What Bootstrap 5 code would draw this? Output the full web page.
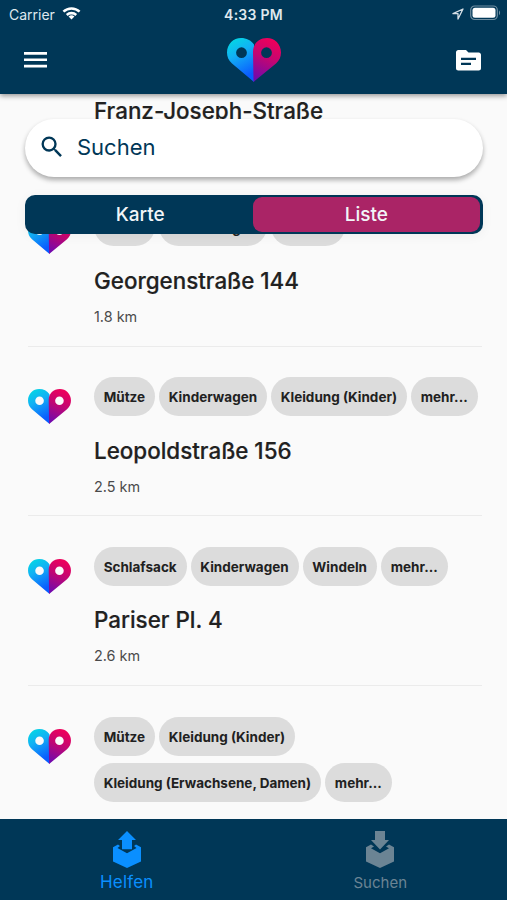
<!DOCTYPE html>
<html lang="de">
<head>
<meta charset="utf-8">
<meta name="viewport" content="width=device-width, initial-scale=1">
<title>Helfen</title>
<link href="https://cdn.jsdelivr.net/npm/bootstrap@5.3.0/dist/css/bootstrap.min.css" rel="stylesheet">
<style>
body{font-family:Inter,"Liberation Sans",sans-serif;background:#fafafa;color:#212121}
svg{display:block;flex:none}
.app{height:900px}
.navy{background:#003757}
.topbar{height:94px;z-index:3;box-shadow:0 2px 5px rgba(0,0,0,.4)}
.status{height:28px;font-size:14px;color:#dfe8ee;padding:0 6px 0 9px}
.clock{left:0;right:0;font-weight:600;letter-spacing:.25px}
.wifi{margin:0 0 2px 7px}
.battery{margin:0 0 2px 6px}
.tools{height:64px;padding:0 26px 0 24px}
.brand{margin-left:4px}
.feed{margin-top:-87px;padding:0 25px 0 28px}
.entry{height:169.8px;padding-top:30.5px;border-bottom:1px solid #ebebeb}
.entry:first-child{border-color:transparent}
.entry:first-child .street{margin-top:59.5px}
.entry .logo{margin-top:12px;margin-right:23px}
.chips{column-gap:4px;row-gap:7px;margin-right:-4px}
.chip{height:39px;border-radius:20px;background:#dcdcdc;padding:2px 10px 0 9.7px;font-size:13.500px;font-weight:700;white-space:nowrap}
.street{font-size:22.4px;line-height:28px;font-weight:500;-webkit-text-stroke:.2px #212121;margin-top:20.500px;white-space:nowrap}
.dist{font-size:14.4px;line-height:20px;margin-top:12px;color:#4a4a4a}
.overlay{top:25px;left:25px;right:24px;z-index:2}
.search{height:58px;color:#003757;font-size:22px;padding:0 0 2px 13px;gap:11px;box-shadow:0 3px 5px rgba(0,0,0,.32)}
.switch{height:39px;margin-top:18px;border-radius:10px;padding:2px 3px 2px 0;font-size:19px;font-weight:500;color:#f2f5f8;box-shadow:0 2px 12px rgba(0,0,0,.05)}
.switch>div{padding-top:1px}
.switch .idle-half{padding-left:3px}
.switch .on{background:#aa2466;border-radius:9px}
.tabs{height:81px;z-index:3}
.tab{padding-top:12px;font-size:17px;line-height:22px;color:#0a8fff}
.tab.idle{color:#6b8494;font-size:15px}
.tab span{margin-top:3px;letter-spacing:.2px}
.tab.idle span{margin-top:4px;letter-spacing:0}
</style>
<script src="https://cdn.jsdelivr.net/npm/bootstrap@5.3.0/dist/js/bootstrap.bundle.min.js"></script>
</head>
<body>
<svg width="0" height="0" class="position-absolute" aria-hidden="true">
<defs>
<linearGradient id="blue" x1="0" y1="0" x2=".35" y2="1"><stop offset="0" stop-color="#00dfe0"/><stop offset=".45" stop-color="#12b0f5"/><stop offset="1" stop-color="#0a5cff"/></linearGradient>
<linearGradient id="pink" x1=".6" y1="0" x2=".3" y2="1"><stop offset="0" stop-color="#f0005a"/><stop offset=".45" stop-color="#c20672"/><stop offset="1" stop-color="#7009ae"/></linearGradient>
<symbol id="heart" viewBox="0 0 54 44">
<path fill="url(#blue)" fill-rule="evenodd" d="M27 44 5 25.500C1.500 22.500 0 18.500 0 14.500 0 6 6.500 0 14 0c5.500 0 10 2.200 13 6.500ZM14.500 9.300a5.400 5.400 0 1 0 0 10.800 5.400 5.400 0 0 0 0-10.800Z"/>
<path fill="url(#pink)" fill-rule="evenodd" d="M26.500 44 49 25.500c3.500-3 5-7 5-11C54 6 47.500 0 40 0c-8 0-14 5.500-14 14ZM39.500 9.300a5.400 5.400 0 1 0 0 10.800 5.400 5.400 0 0 0 0-10.800Z"/>
</symbol>
</defs>
</svg>
<div class="app d-flex flex-column overflow-hidden">
<header class="topbar navy position-relative flex-shrink-0">
<div class="status d-flex align-items-center position-relative">
<span>Carrier</span>
<svg class="wifi" width="19" height="15" viewBox="1 1 20 15" fill="none" stroke="#fff" stroke-width="2.700"><path d="M2.500 6.500a12.500 12.500 0 0 1 17 0"/><path d="M6 10a7.500 7.500 0 0 1 10 0"/><path d="M11 14.800 7.900 11.700a4.600 4.600 0 0 1 6.200 0Z" fill="#fff" stroke="none"/></svg>
<span class="clock position-absolute text-center">4:33 PM</span>
<svg class="ms-auto" width="12" height="12" viewBox="0 0 12 12" fill="none" stroke="#d5dfe6" stroke-width="1.300" stroke-linejoin="round"><path d="M11 1 1 5.700h5V11Z"/></svg>
<svg class="battery" width="31" height="16" viewBox="0 0 31 16"><rect x=".7" y="1" width="26.600" height="13.500" rx="4" fill="none" stroke="#6f8ea1" stroke-width="1.200"/><rect x="2.500" y="2.800" width="23" height="10" rx="2.500" fill="#fff"/><path d="M29 5.500c1.400.6 1.400 4 0 4.600Z" fill="#6f8ea1"/></svg>
</div>
<div class="tools d-flex align-items-center justify-content-between">
<svg width="23" height="16" viewBox="0 0 23 16" fill="#fff"><path d="M0 0h23v2.700H0zM0 6.400h23v2.700H0zM0 12.700h23v2.700H0z"/></svg>
<svg class="brand" width="54" height="44"><use href="#heart"/></svg>
<svg width="25" height="21" viewBox="0 0 25 21"><path fill="#fff" d="M2.300 0H10l2.500 2.500h10.200C24 2.500 25 3.500 25 4.800v13.400c0 1.300-1 2.300-2.300 2.300H2.300C1 20.500 0 19.500 0 18.200V2.300C0 1 1 0 2.300 0Z"/><path fill="#003757" d="M5 7.800h15V10H5zM5 12.800h10V15H5z"/></svg>
</div>
</header>
<main class="position-relative flex-grow-1 overflow-hidden">
<div class="overlay position-absolute">
<div class="search bg-white rounded-pill d-flex align-items-center">
<svg width="28" height="28" viewBox="0 0 24 24" fill="#003757"><path d="M15.500 14h-.79l-.28-.27A6.470 6.470 0 0 0 16 9.500 6.500 6.500 0 1 0 9.500 16c1.610 0 3.090-.59 4.230-1.570l.27.28v.79l5 4.990L20.490 19l-4.990-5Zm-6 0a4.500 4.500 0 1 1 0-9 4.500 4.500 0 0 1 0 9Z"/></svg>
<span>Suchen</span>
</div>
<div class="switch navy d-flex text-center">
<div class="idle-half w-50 d-flex align-items-center justify-content-center">Karte</div>
<div class="on w-50 d-flex align-items-center justify-content-center">Liste</div>
</div>
</div>
<div class="feed">
<article class="entry d-flex align-items-start"><svg class="logo" width="43" height="35"><use href="#heart"/></svg>
<div class="flex-grow-1"><div class="street">Franz-Joseph-Straße</div></div></article>
<article class="entry d-flex align-items-start"><svg class="logo" width="43" height="35"><use href="#heart"/></svg>
<div class="flex-grow-1"><div class="chips d-flex flex-wrap"><span class="chip d-flex align-items-center">Mütze</span><span class="chip d-flex align-items-center">Kinderwagen</span><span class="chip d-flex align-items-center">Windeln</span></div>
<div class="street">Georgenstraße 144</div><div class="dist">1.8 km</div></div></article>
<article class="entry d-flex align-items-start"><svg class="logo" width="43" height="35"><use href="#heart"/></svg>
<div class="flex-grow-1"><div class="chips d-flex flex-wrap"><span class="chip d-flex align-items-center">Mütze</span><span class="chip d-flex align-items-center">Kinderwagen</span><span class="chip d-flex align-items-center">Kleidung (Kinder)</span><span class="chip d-flex align-items-center">mehr...</span></div>
<div class="street">Leopoldstraße 156</div><div class="dist">2.5 km</div></div></article>
<article class="entry d-flex align-items-start"><svg class="logo" width="43" height="35"><use href="#heart"/></svg>
<div class="flex-grow-1"><div class="chips d-flex flex-wrap"><span class="chip d-flex align-items-center">Schlafsack</span><span class="chip d-flex align-items-center">Kinderwagen</span><span class="chip d-flex align-items-center">Windeln</span><span class="chip d-flex align-items-center">mehr...</span></div>
<div class="street">Pariser Pl. 4</div><div class="dist">2.6 km</div></div></article>
<article class="entry d-flex align-items-start"><svg class="logo" width="43" height="35"><use href="#heart"/></svg>
<div class="flex-grow-1"><div class="chips d-flex flex-wrap"><span class="chip d-flex align-items-center">Mütze</span><span class="chip d-flex align-items-center">Kleidung (Kinder)</span><span class="w-100 d-flex chips"><span class="chip d-flex align-items-center">Kleidung (Erwachsene, Damen)</span><span class="chip d-flex align-items-center">mehr...</span></span></div></div></article>
</div>
</main>
<nav class="tabs navy d-flex flex-shrink-0">
<div class="tab w-50 d-flex flex-column align-items-center">
<svg width="28" height="37" viewBox="0 0 28 37" fill="currentColor"><path d="M14 0 23 9h-4v9.300H9V9H5Z"/><path d="M0 16.300 5 13.500 7 15l-2.500 2L14 22.300 23.500 17 21 15l2-1.500 5 2.800V30.500L14 37 0 30.500Z"/></svg>
<span>Helfen</span></div>
<div class="tab idle w-50 d-flex flex-column align-items-center">
<svg width="28" height="37" viewBox="0 0 28 37" fill="currentColor"><path d="M9 0h10v9h4l-9 9.500L5 9h4Z"/><path d="M0 16.300 5 13.500 8 15.500l-3 1.700 9 5.100 9-5.100-3-1.700 3-2 5 2.800V30.500L14 37 0 30.500Z"/></svg>
<span>Suchen</span></div>
</nav>
</div>
</body>
</html>
